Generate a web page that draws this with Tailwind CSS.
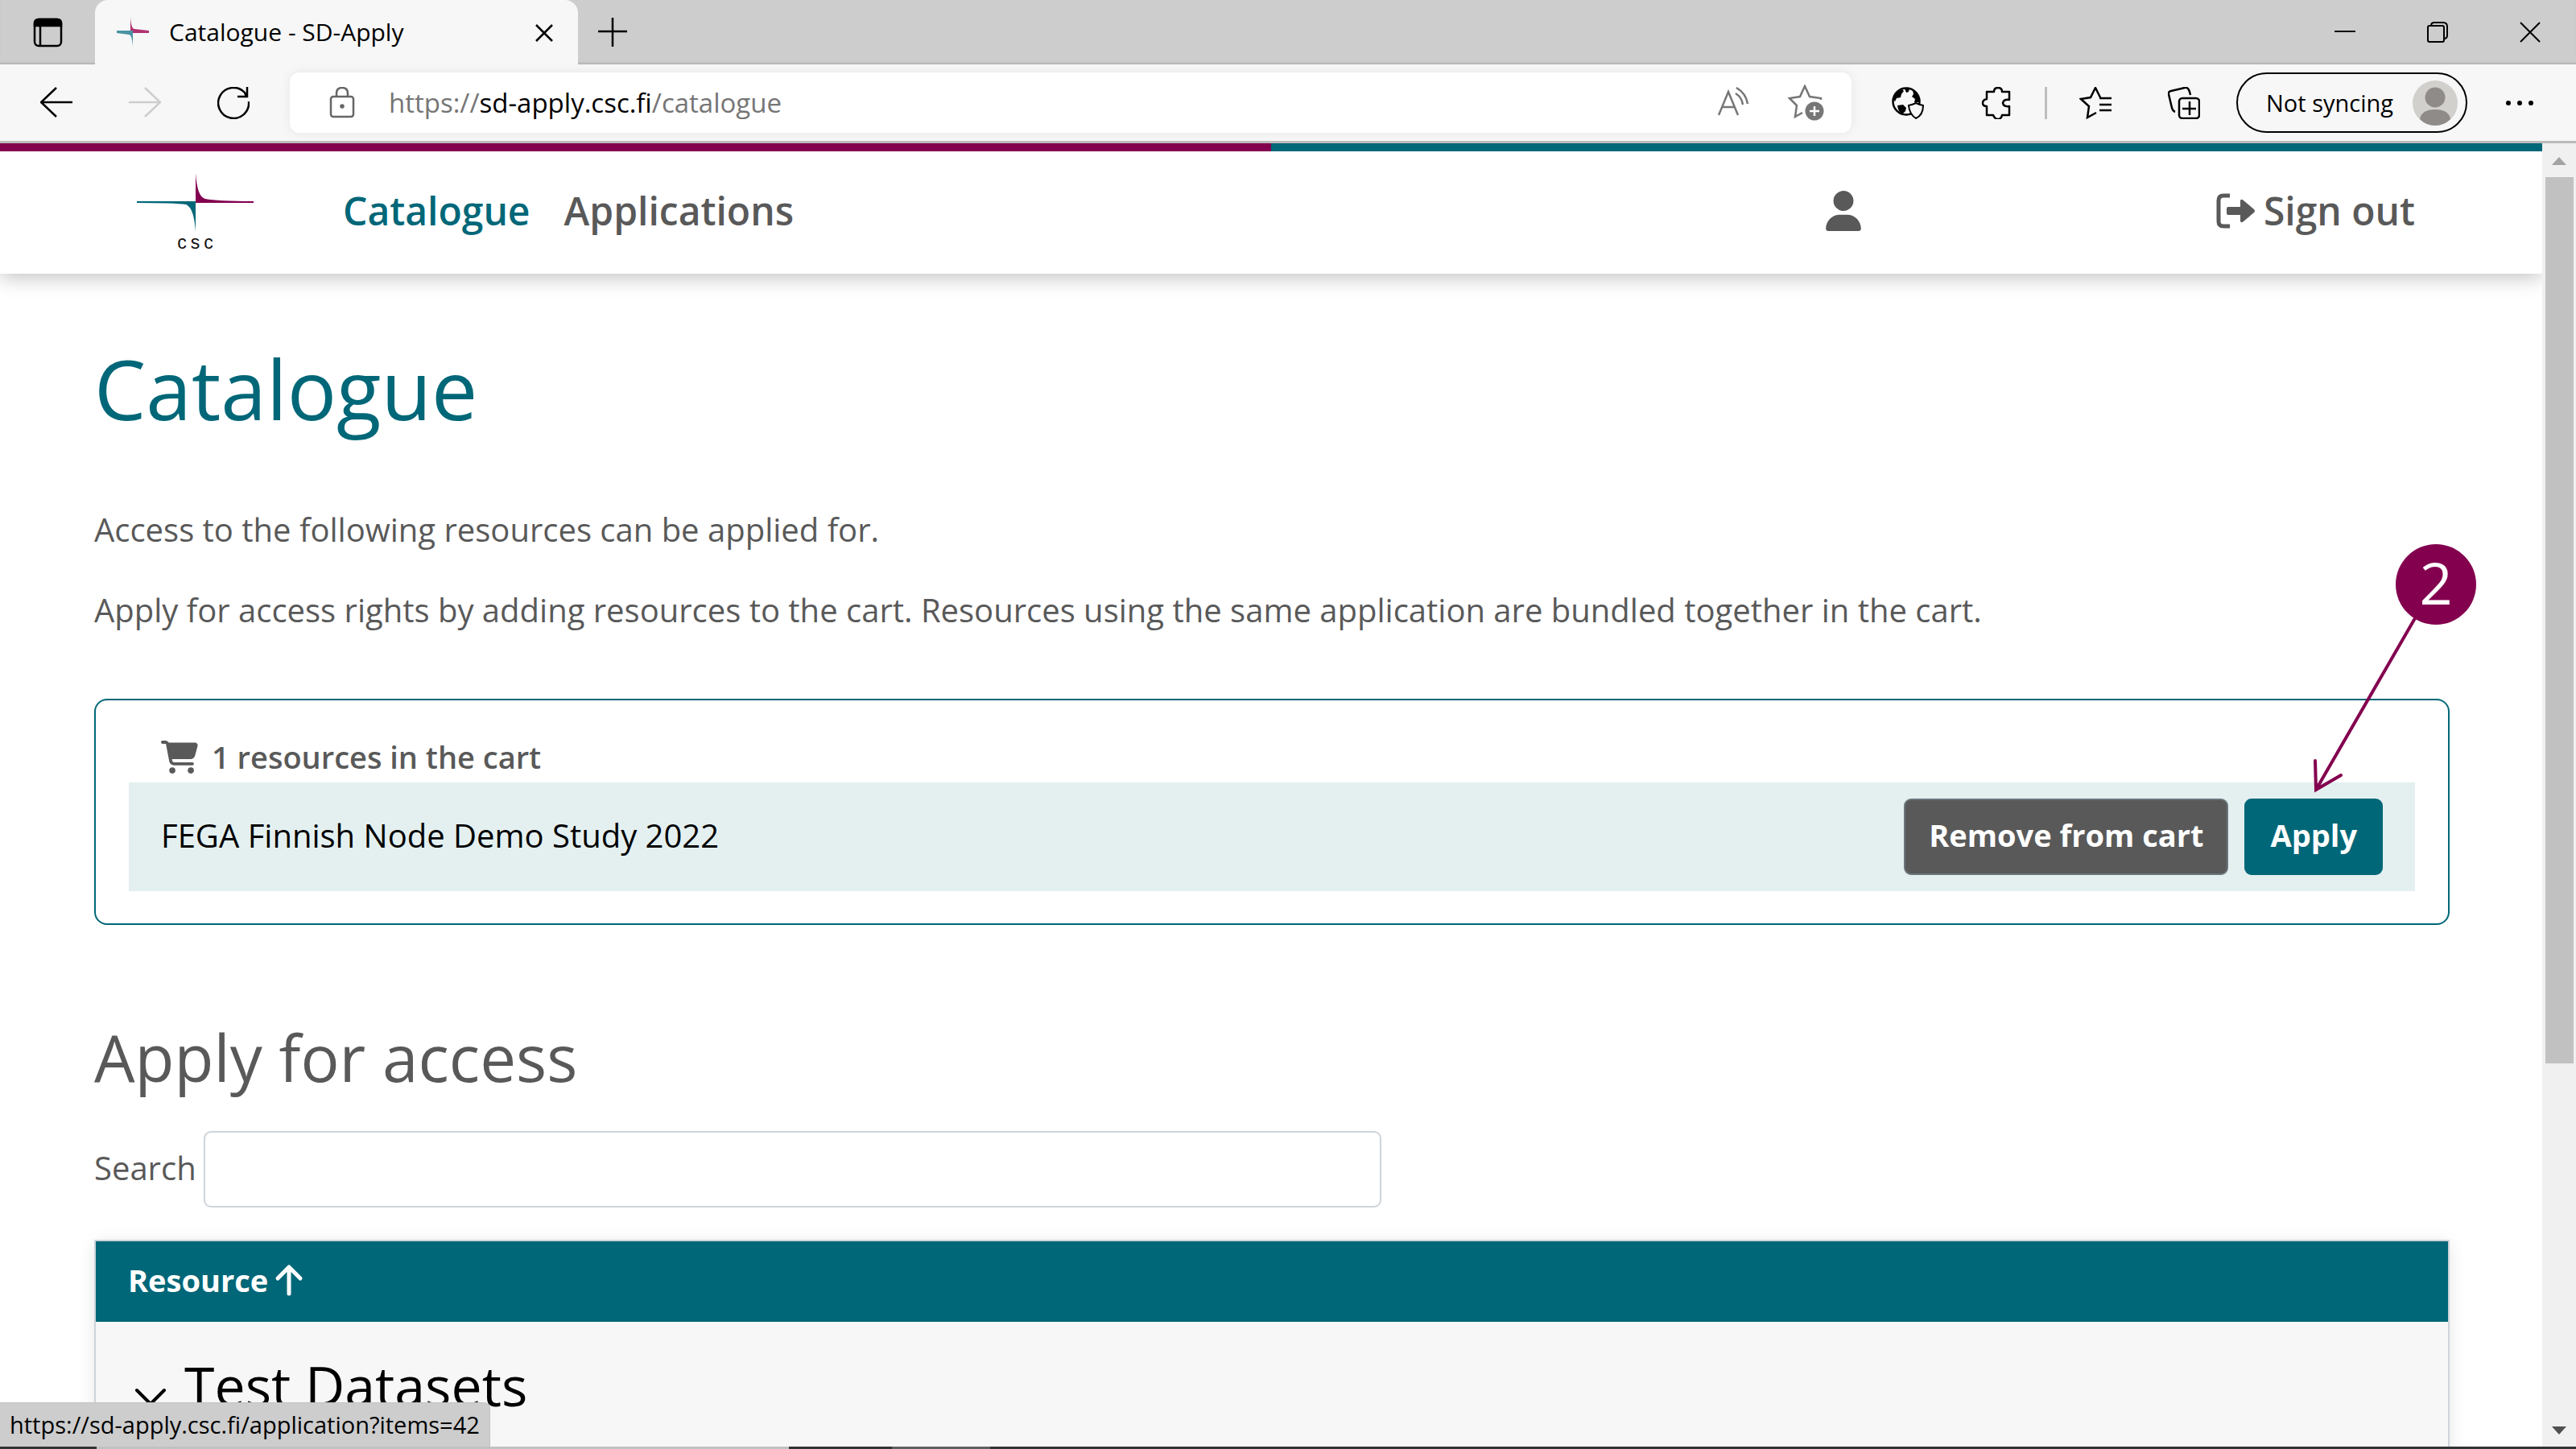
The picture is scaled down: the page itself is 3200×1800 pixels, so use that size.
<!DOCTYPE html>
<html lang="en">
<head>
<meta charset="utf-8">
<title>Catalogue - SD-Apply</title>
<script src="https://cdn.jsdelivr.net/npm/@tailwindcss/browser@4"></script>
</head>
<body class="relative flex h-screen flex-col overflow-hidden bg-white font-['Open_Sans',sans-serif] text-[#595959]">

<!-- Tab strip -->
<div class="flex h-20 shrink-0 items-stretch bg-[#cdcdcd] text-black shadow-[inset_0_-3px_2px_-1px_#b4b4b4]">
  <button type="button" aria-label="Tab actions" class="flex w-[118px] items-center justify-center">
    <svg class="size-10" viewBox="0 0 40 40" fill="none" stroke="#000" stroke-width="2.5"><rect x="4" y="4" width="33" height="33" rx="5"/><path d="M4 12V9q0-5 5-5h23q5 0 5 5v3z" fill="#000"/><path d="M11 12v25"/></svg>
  </button>
  <div class="flex w-[600px] items-center rounded-t-2xl bg-[#f7f7f7] pl-[27px] pr-[22px]">
    <svg class="size-10" viewBox="0 0 40 40"><path d="M17 1q1 15 5 15l18 2v3H17z" fill="#b0336f"/><path d="M20 38q-1-15-5-15L0 21v-3h20z" fill="#4a93a4"/></svg>
    <span class="ml-[25px] flex-1 text-[30px] leading-10">Catalogue - SD-Apply</span>
    <button type="button" aria-label="Close tab"><svg class="size-10" viewBox="0 0 40 40" stroke="#000" stroke-width="2.500"><path d="M10 11l20 20M30 11L10 31"/></svg></button>
  </div>
  <button type="button" aria-label="New tab" class="ml-[22px]"><svg class="size-10" viewBox="0 0 40 40" stroke="#000" stroke-width="2.500"><path d="M21 2v36M3 19h36"/></svg></button>
  <div class="ml-auto flex">
    <button type="button" aria-label="Minimize" class="flex w-[115px] items-center justify-center"><svg class="size-7" viewBox="0 0 28 28" stroke="#000" stroke-width="2"><path d="M1 13h26"/></svg></button>
    <button type="button" aria-label="Restore" class="flex w-[115px] items-center justify-center"><svg class="size-7" viewBox="0 0 28 28" fill="none" stroke="#000" stroke-width="2"><rect x="2" y="6" width="20" height="20" rx="2"/><path d="M6 6q0-4 4-4h11q5 0 5 5v11q0 4-4 4"/></svg></button>
    <button type="button" aria-label="Close" class="flex w-[115px] items-center justify-center"><svg class="size-7" viewBox="0 0 28 28" stroke="#000" stroke-width="2"><path d="M2 2l24 24M26 2L2 26"/></svg></button>
  </div>
</div>

<!-- Toolbar -->
<div class="flex h-[98px] shrink-0 items-center border-b-[3px] border-[#bbb] bg-[#f7f7f7] px-[50px] text-black">
  <div class="flex items-center gap-[70px]">
    <button type="button" aria-label="Back"><svg class="size-10" viewBox="0 0 40 40" fill="none" stroke="#000" stroke-width="2.500"><path d="M40 19H1M20 1L1 19l19 18"/></svg></button>
    <button type="button" aria-label="Forward" disabled><svg class="size-10" viewBox="0 0 40 40" fill="none" stroke="#cdcdcd" stroke-width="2.500"><path d="M0 19h39M20 1l19 18-19 18"/></svg></button>
    <button type="button" aria-label="Refresh"><svg class="size-10" viewBox="0 0 40 40" fill="none" stroke="#000" stroke-width="2.500"><path d="M39 18A19 19 0 1 1 34 7l2 5M37 0v12H25"/></svg></button>
  </div>
  <div class="ml-[50px] flex h-[75px] flex-1 items-center rounded-xl bg-white pl-[45px] pr-[34px] shadow-[0_0_12px_#e6e6e6]">
    <svg class="size-10" viewBox="0 0 40 40" fill="none" stroke="#666" stroke-width="2.500"><rect x="6" y="12" width="28" height="25" rx="3"/><path d="M13 12V8q0-7 7-7t7 7v4"/><circle cx="20" cy="24" r="1.500" fill="#666"/></svg>
    <span class="ml-[38px] flex-1 text-[33px] leading-10 text-[#757575]">https://<span class="text-black">sd-apply.csc.fi</span>/catalogue</span>
    <button type="button" aria-label="Read aloud"><svg class="size-10" viewBox="0 0 40 40" fill="none" stroke="#767676" stroke-width="2.500"><path d="M1 35L13 6l12 29M5 25h16M22 8q8 5 9 14M23 1q12 7 14 20"/></svg></button>
    <button type="button" aria-label="Add to favourites" class="ml-[46px]"><svg class="size-[46px]" viewBox="0 0 46 46" fill="none" stroke="#767676" stroke-width="2.500"><path d="M42 19v-2l-14-2-6-13-6 13-13 2 9 9-2 14 9-5"/><circle cx="34" cy="33" r="11.500" fill="#767676" stroke="none"/><path d="M34 27v12M28 33h12" stroke="#fff"/></svg></button>
  </div>
  <button type="button" aria-label="Site protection" class="ml-[50px]"><svg class="size-10" viewBox="0 0 40 40"><circle cx="18" cy="18" r="16.500" fill="#f7f7f7" stroke="#000" stroke-width="2.500"/><path d="M2 16Q4 6 13 3l2 2-3 4-1 4-5 1-2 4zM16 2h6l-1 4-3 1zM7 23l7-1 4 4-1 4-4 4Q8 31 7 23zM26 4q6 3 8 10v5h-6l1-4-4-3 2-3z" fill="#000"/><path d="M21 23q5-1 9-3 4 2 9 3 0 12-9 16-8-5-9-16z" fill="#f7f7f7" stroke="#000" stroke-width="2"/></svg></button>
  <button type="button" aria-label="Extensions" class="ml-[70px]"><svg class="size-10" viewBox="0 0 40 40" fill="none" stroke="#000" stroke-width="2.500" stroke-linejoin="round"><path d="M8 6h9q0-5 5-5t5 5h9v10q-7-1-8 4 1 5 8 4v11h-9q-1 5-5 5t-6-5H8V24q-5 0-5-4t5-5z"/></svg></button>
  <span class="ml-[40px] h-10 w-[3px] bg-[#bebebe]"></span>
  <button type="button" aria-label="Favourites" class="ml-[40px]"><svg class="size-10" viewBox="0 0 40 40" fill="none" stroke="#000" stroke-width="2.500"><path d="M25 14h15M25 22h15M25 29h15M21 32L10 38l2-14-10-9 12-2 6-12 6 12"/></svg></button>
  <button type="button" aria-label="Collections" class="ml-[70px]"><svg class="size-10" viewBox="0 0 40 40" fill="none" stroke="#000" stroke-width="2.500"><rect x="14" y="14" width="25" height="25" rx="4"/><path d="M27 18v17M18 27h17M9 31q-3-1-4-5L1 9q-1-3 3-4l17-4q4-1 6 5l1 4"/></svg></button>
  <button type="button" class="ml-[45px] flex h-[75px] w-[287px] items-center justify-between rounded-full border-[2px] border-black pl-[35px] pr-[10px] text-[29px] leading-10">
    Not syncing
    <svg class="size-14" viewBox="0 0 56 56"><circle cx="28" cy="28" r="28" fill="#d2d0cd"/><circle cx="28" cy="21" r="12.500" fill="#8f8b88"/><path d="M9 48q2-12 19-12t19 12q-8 8-19 8T9 48z" fill="#8f8b88"/></svg>
  </button>
  <button type="button" aria-label="Settings and more" class="ml-[45px]"><svg class="size-10" viewBox="0 0 40 40"><circle cx="6" cy="20" r="3"/><circle cx="20" cy="20" r="3"/><circle cx="34" cy="20" r="3"/></svg></button>
</div>

<!-- Viewport -->
<div class="flex min-h-0 flex-1">
  <div class="flex min-w-0 flex-1 flex-col overflow-hidden">
    <header class="relative shrink-0 shadow-[0_4px_24px_rgba(0,0,0,0.25)]">
      <div class="grid h-[10px] grid-cols-2"><div class="bg-[#83004f]"></div><div class="bg-[#006778]"></div></div>
      <nav class="flex h-[152px] items-center bg-white pb-1 pl-[170px] pr-[158px] text-[48px] font-semibold leading-[60px]">
        <a href="#" aria-label="CSC home"><svg class="h-[110px] w-[145px]" viewBox="0 0 145 110"><path d="M73 8q2 30 12 32 14 3 60 3v2H73z" fill="#83004f"/><path d="M73 43v38q-2-30-12-34-14-2-61-2v-2z" fill="#006778"/><text x="75" y="102" text-anchor="middle" letter-spacing="5" font-size="23" font-weight="400" font-family="Liberation Sans, sans-serif" fill="#111">csc</text></svg></a>
        <a href="#" class="ml-[111px] text-[#006778]">Catalogue</a>
        <a href="#" class="ml-[42px]">Applications</a>
        <a href="#" aria-label="Profile" class="ml-auto"><svg class="h-[50px] w-[44px]" viewBox="0 0 448 512" fill="currentColor"><path d="M224 256A128 128 0 1 0 224 0a128 128 0 1 0 0 256zm-45.700 48C79.800 304 0 383.800 0 482.300 0 498.700 13.300 512 29.700 512h388.600c16.400 0 29.700-13.300 29.700-29.700C448 383.800 368.200 304 269.700 304z"/></svg></a>
        <a href="#" class="ml-[440px] flex items-center gap-[10px]"><svg class="size-[50px]" viewBox="0 0 50 50"><path d="M18 6h-8Q4 6 4 12v26q0 6 6 6h8" fill="none" stroke="#595959" stroke-width="5"/><path d="M16 20h15v-7q0-4 4-1l13 11q2 2 0 4L35 38q-4 3-4-1v-7H16q-2 0-2-2v-6q0-2 2-2z" fill="#595959"/></svg>Sign out</a>
      </nav>
    </header>

    <main class="pl-[117px] pr-[115px] pt-[83px] text-[40px] leading-[60px]">
      <h1 class="text-[102px] leading-[120px] text-[#006778]">Catalogue</h1>
      <p class="mt-[85px]">Access to the following resources can be applied for.</p>
      <p class="mt-10">Apply for access rights by adding resources to the cart. Resources using the same application are bundled together in the cart.</p>

      <section class="mt-20 rounded-[16px] border-2 border-[#006778] px-[41px] py-10">
        <h2 class="flex items-center gap-[17px] pl-10 text-[38px] font-semibold leading-[60px]">
          <svg class="h-[41px] w-[46px]" viewBox="0 0 576 512" fill="#595959"><path d="M0 24C0 10.700 10.700 0 24 0h45.500c22 0 41.500 12.800 50.600 32h411c26.300 0 45.500 25 38.600 50.400l-41 152.300c-8.500 31.400-37 53.300-69.500 53.300H170.700l5.400 28.500c2.200 11.300 12.100 19.500 23.600 19.500H488a24 24 0 1 1 0 48H199.700c-34.600 0-64.300-24.600-70.700-58.500L77.400 54.500c-.7-3.800-4-6.500-7.900-6.500H24C10.700 48 0 37.300 0 24z"/><circle cx="176" cy="464" r="48"/><circle cx="464" cy="464" r="48"/></svg>
          1 resources in the cart
        </h2>
        <div class="mt-[2px] flex items-center bg-[#e4f0f0] px-10 py-5">
          <span class="flex-1 pb-1 text-black">FEGA Finnish Node Demo Study 2022</span>
          <button type="button" class="h-[95px] rounded-[9px] border-2 border-[#6c757d] bg-[#595959] px-[29px] pb-[6px] text-[38px] font-bold text-white">Remove from cart</button>
          <div class="relative ml-5 flex">
            <button type="button" class="h-[95px] rounded-[9px] bg-[#006778] px-8 pb-[6px] text-[38px] font-bold text-white">Apply</button>
            <svg class="absolute right-[-127px] top-[-322px] h-[330px] w-[220px]" viewBox="0 0 220 330"><g fill="none" stroke="#83004f" stroke-width="4" stroke-linecap="round"><path d="M133 98L10 311M9 275l1 36 31-18"/></g><circle cx="159" cy="56" r="50" fill="#83004f"/><text x="159" y="81" text-anchor="middle" font-size="72" fill="#fff">2</text></svg>
          </div>
        </div>
      </section>

      <h2 class="mt-[116px] text-[80px] leading-[96px]">Apply for access</h2>
      <div class="mt-[44px] flex items-center gap-[9px]">
        <label for="search" class="pb-1">Search</label>
        <input id="search" type="text" class="h-[95px] w-1/2 rounded-[9px] border-2 border-[#ced4da] bg-white px-6">
      </div>

      <div class="mt-10 border-2 border-[#ced4da] shadow-[0_4px_20px_rgba(0,0,0,0.1)]">
        <table class="w-full border-collapse text-left">
          <thead>
            <tr class="bg-[#006778] text-white"><th scope="col" class="h-[100px] px-10 pb-1 text-[38px] font-bold"><span class="flex items-center gap-[7px]">Resource <svg class="size-10" viewBox="0 0 40 40" fill="none" stroke="#fff" stroke-width="5" stroke-linecap="round" stroke-linejoin="round"><path d="M19 37V4M5 18L19 4l14 14"/></svg></span></th></tr>
          </thead>
          <tbody>
            <tr class="bg-[#f7f7f7] text-black"><td class="h-[400px] px-[47px] pt-[39px] align-top"><span class="flex items-center gap-[23px] text-[68px] leading-[80px]"><svg class="mt-[30px] size-10" viewBox="0 0 40 40" fill="none" stroke="#000" stroke-width="4" stroke-linecap="round" stroke-linejoin="round"><path d="M4 11l17 17 17-17"/></svg>Test Datasets</span></td></tr>
          </tbody>
        </table>
      </div>
    </main>
  </div>

  <!-- Scrollbar -->
  <div class="flex w-[42px] shrink-0 flex-col items-center bg-[#f0f0f0]">
    <svg class="mt-[17px] h-[10px] w-[18px]" viewBox="0 0 18 10"><path d="M9 0l9 10H0z" fill="#a3a3a3"/></svg>
    <div class="mt-[15px] h-[68%] w-[35px] bg-[#c1c1c1]"></div>
    <svg class="mb-[15px] mt-auto h-[10px] w-[18px]" viewBox="0 0 18 10"><path d="M0 0h18L9 10z" fill="#505050"/></svg>
  </div>
</div>

<!-- Link target shown on hover -->
<div class="absolute bottom-[3px] left-0 flex h-[55px] items-center rounded-tr-lg border-r border-t border-[#c2c2c2] bg-[#cdcdcd] px-3 text-[29px] leading-10 text-black">https://sd-apply.csc.fi/application?items=42</div>

<!-- Taskbar edge -->
<div class="flex h-[3px] shrink-0 bg-[#333]"><div class="ml-[120px] w-[860px] bg-[#c1c1c1]"></div><div class="ml-[128px] w-[122px] bg-[#606060]"></div></div>
</body>
</html>
